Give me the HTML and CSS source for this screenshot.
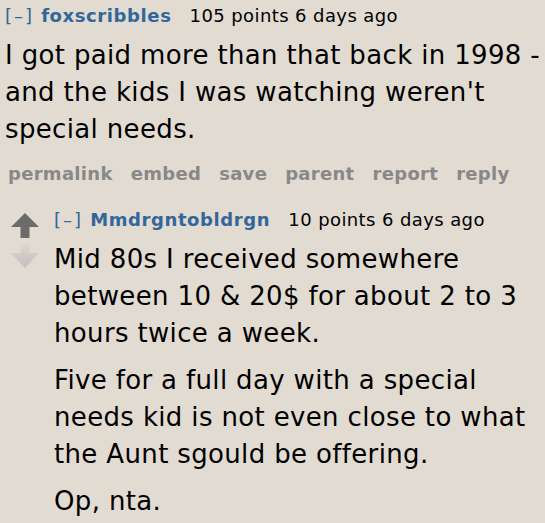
FILE: index.html
```html
<!DOCTYPE html>
<html>
<head>
<meta charset="utf-8">
<link rel="stylesheet" href="styles.css">
</head>
<body>
<div class="comment">
  <div class="tagline">
    <span class="expand">[–]</span>
    <a class="author">foxscribbles</a>
    <span class="score">105 points</span>
    <span class="time">6 days ago</span>
  </div>
  <div class="md">
    <p>I got paid more than that back in 1998 - and the kids I was watching weren't special needs.</p>
  </div>
  <ul class="buttons">
    <li>permalink</li>
    <li>embed</li>
    <li>save</li>
    <li>parent</li>
    <li>report</li>
    <li>reply</li>
  </ul>
  <div class="child">
    <div class="midcol">
      <svg class="arrow" width="28" height="26" viewBox="0 0 28 26">
        <path d="M14 0 L28 14 L18.5 14 L18.5 25 L9.5 25 L9.5 14 L0 14 Z" fill="#6b6b6b"/>
      </svg>
      <svg class="arrow" width="28" height="26" viewBox="0 0 28 26">
        <defs>
          <linearGradient id="dg" x1="0" y1="0" x2="0" y2="1">
            <stop offset="0" stop-color="#dcd8d2"/>
            <stop offset="1" stop-color="#c2c0bd"/>
          </linearGradient>
        </defs>
        <path d="M9.5 0 L18.5 0 L18.5 10 L28 10 L14 25 L0 10 L9.5 10 Z" fill="url(#dg)"/>
      </svg>
    </div>
    <div class="entry">
      <div class="tagline">
        <span class="expand">[–]</span>
        <a class="author">Mmdrgntobldrgn</a>
        <span class="score">10 points</span>
        <span class="time">6 days ago</span>
      </div>
      <div class="md">
        <p>Mid 80s I received somewhere between 10 &amp; 20$ for about 2 to 3 hours twice a week.</p>
        <p>Five for a full day with a special needs kid is not even close to what the Aunt sgould be offering.</p>
        <p>Op, nta.</p>
      </div>
    </div>
  </div>
</div>
</body>
</html>
```
FILE: styles.css
```css
html, body {
  margin: 0;
  padding: 0;
  background: #e2dbd2;
}
body {
  font-family: "DejaVu Sans", Verdana, sans-serif;
  color: #000;
  overflow: hidden;
}
.comment {
  padding: 3px 0 0 5px;
}
.tagline {
  font-size: 18px;
  line-height: 26px;
  letter-spacing: 0.4px;
  white-space: nowrap;
  margin-bottom: 8px;
}
.expand {
  color: #369;
  letter-spacing: 2px;
  margin-right: 1px;
}
.author {
  color: #369;
  font-weight: bold;
  letter-spacing: 0.6px;
  margin-right: 12px;
}
.md {
  font-size: 26px;
  line-height: 37px;
  letter-spacing: 0.35px;
}
.md p {
  margin: 0 0 10px 0;
}
.buttons {
  list-style: none;
  margin: 14px 0 0 0;
  padding: 0 0 0 3px;
  display: flex;
  gap: 18px;
  font-size: 18px;
  font-weight: bold;
  letter-spacing: 0.3px;
  color: #888;
  line-height: 24px;
}
.child {
  display: flex;
  margin-top: 21px;
}
.midcol {
  width: 43px;
  padding: 6px 0 0 6px;
  display: flex;
  flex-direction: column;
  align-items: flex-start;
  gap: 4px;
}
.arrow {
  display: block;
}
.entry {
  flex: 1;
  padding-right: 4px;
}
```
